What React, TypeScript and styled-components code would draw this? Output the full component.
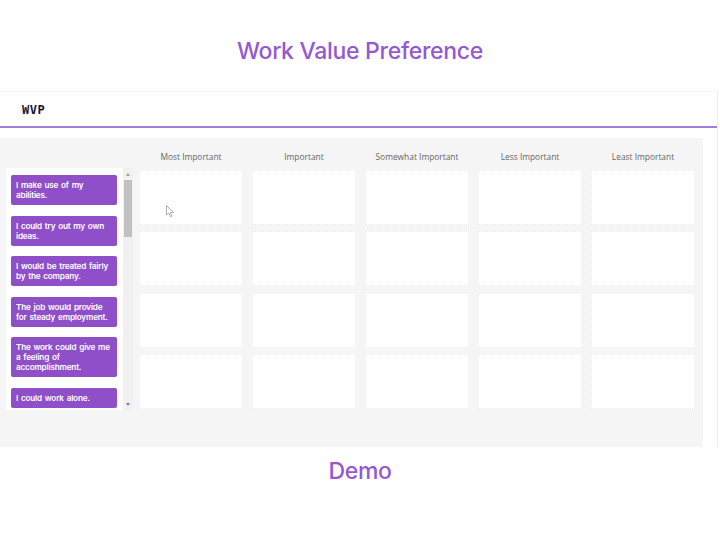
import React from "react";
import styled, { createGlobalStyle } from "styled-components";

const GlobalStyle = createGlobalStyle`
  html, body {
    margin: 0;
    padding: 0;
    background: #ffffff;
  }
  body {
    font-family: "Open Sans", "Liberation Sans", sans-serif;
  }
`;

const columns = [
  "Most Important",
  "Important",
  "Somewhat Important",
  "Less Important",
  "Least Important",
];

const values = [
  "I make use of my abilities.",
  "I could try out my own ideas.",
  "I would be treated fairly by the company.",
  "The job would provide for steady employment.",
  "The work could give me a feeling of accomplishment.",
  "I could work alone.",
];

const Page = styled.div`
  width: 720px;
  height: 540px;
  overflow: hidden;
  position: relative;
`;

const Title = styled.h1`
  margin: 0;
  height: 91px;
  display: flex;
  align-items: center;
  justify-content: center;
  padding-top: 11px;
  box-sizing: border-box;
  font-family: Inter, "Liberation Sans", sans-serif;
  font-weight: 500;
  font-size: 23px;
  letter-spacing: -0.3px;
  color: #9558d2;
`;

const Panel = styled.div`
  width: 718px;
  border-right: 1px solid #ececec;
  box-sizing: border-box;
`;

const TopBar = styled.div`
  height: 37px;
  border-top: 1px dotted #ececec;
  border-bottom: 2px solid #a57ddb;
  box-sizing: border-box;
  display: flex;
  align-items: center;
  padding-left: 22px;
`;

const Brand = styled.span`
  font-family: "DejaVu Sans Mono", "Liberation Mono", monospace;
  font-weight: bold;
  font-size: 12px;
  letter-spacing: 0.5px;
  color: #1c1230;
  margin-top: 2px;
`;

const Board = styled.div`
  margin-top: 10px;
  width: 703px;
  height: 309px;
  background: #f5f5f5;
  display: flex;
  align-items: flex-start;
  gap: 6px;
  padding: 12px 0 0 6px;
  box-sizing: border-box;
`;

const Sidebar = styled.div`
  margin-top: 18px;
  width: 127px;
  height: 242px;
  background: #ffffff;
  display: flex;
  overflow: hidden;
`;

const CardList = styled.div`
  flex: 1;
  display: flex;
  flex-direction: column;
  gap: 10.5px;
  padding: 7px 6px 0 5px;
`;

const ValueCard = styled.div`
  background: #8f4fc9;
  border-radius: 2px;
  padding: 5px 2px 5px 5px;
  color: #ffffff;
  font-family: Inter, "Open Sans", sans-serif;
  font-weight: 600;
  font-size: 8.2px;
  line-height: 10px;
  letter-spacing: -0.2px;
  word-spacing: 1px;
`;

const ScrollTrack = styled.div`
  width: 10px;
  background: #f1f1f1;
  display: flex;
  flex-direction: column;
  align-items: center;
`;

const Arrow = styled.div<{ $down?: boolean; $color: string }>`
  width: 0;
  height: 0;
  border-left: 2.5px solid transparent;
  border-right: 2.5px solid transparent;
  ${(p) =>
    p.$down
      ? `border-top: 3px solid ${p.$color}; margin-top: auto; margin-bottom: 4px;`
      : `border-bottom: 3px solid ${p.$color}; margin-top: 5px;`}
`;

const Thumb = styled.div`
  width: 8px;
  height: 57px;
  background: #c1c1c1;
  margin-top: 4px;
`;

const Grid = styled.div`
  display: grid;
  grid-template-columns: repeat(5, 104px);
  grid-template-rows: 14px repeat(4, 55px);
  column-gap: 9px;
  row-gap: 6.2px;
`;

const ColumnLabel = styled.div`
  font-family: "Open Sans", sans-serif;
  font-size: 8.4px;
  color: #666666;
  text-align: center;
  line-height: 14px;
`;

const Slot = styled.div`
  background: #ffffff;
  border: 1px dotted #ececec;
  box-sizing: border-box;
`;

const Caption = styled.h2`
  margin: 0;
  height: 50px;
  display: flex;
  align-items: center;
  justify-content: center;
  font-family: Inter, "Liberation Sans", sans-serif;
  font-weight: 500;
  font-size: 23px;
  letter-spacing: -0.3px;
  color: #9558d2;
  padding-bottom: 2px;
  box-sizing: border-box;
`;

const Cursor = styled.svg`
  position: absolute;
  left: 166px;
  top: 205px;
`;

export default function App() {
  return (
    <Page>
      <GlobalStyle />
      <Title>Work Value Preference</Title>
      <Panel>
        <TopBar>
          <Brand>WVP</Brand>
        </TopBar>
        <Board>
          <Sidebar>
            <CardList>
              {values.map((v) => (
                <ValueCard key={v}>{v}</ValueCard>
              ))}
            </CardList>
            <ScrollTrack>
              <Arrow $color="#a3a3a3" />
              <Thumb />
              <Arrow $down $color="#8d6cb8" />
            </ScrollTrack>
          </Sidebar>
          <Grid>
            {columns.map((c) => (
              <ColumnLabel key={c}>{c}</ColumnLabel>
            ))}
            {Array.from({ length: 20 }).map((_, i) => (
              <Slot key={i} />
            ))}
          </Grid>
        </Board>
      </Panel>
      <Caption>Demo</Caption>
      <Cursor width="9" height="13" viewBox="0 0 9 13">
        <path
          d="M0.5 0.5 L0.5 10 L2.8 8 L4.4 11.8 L5.8 11.2 L4.3 7.6 L7.5 7.6 Z"
          fill="#ffffff"
          stroke="#9a9a9a"
          strokeWidth="0.8"
        />
      </Cursor>
    </Page>
  );
}
